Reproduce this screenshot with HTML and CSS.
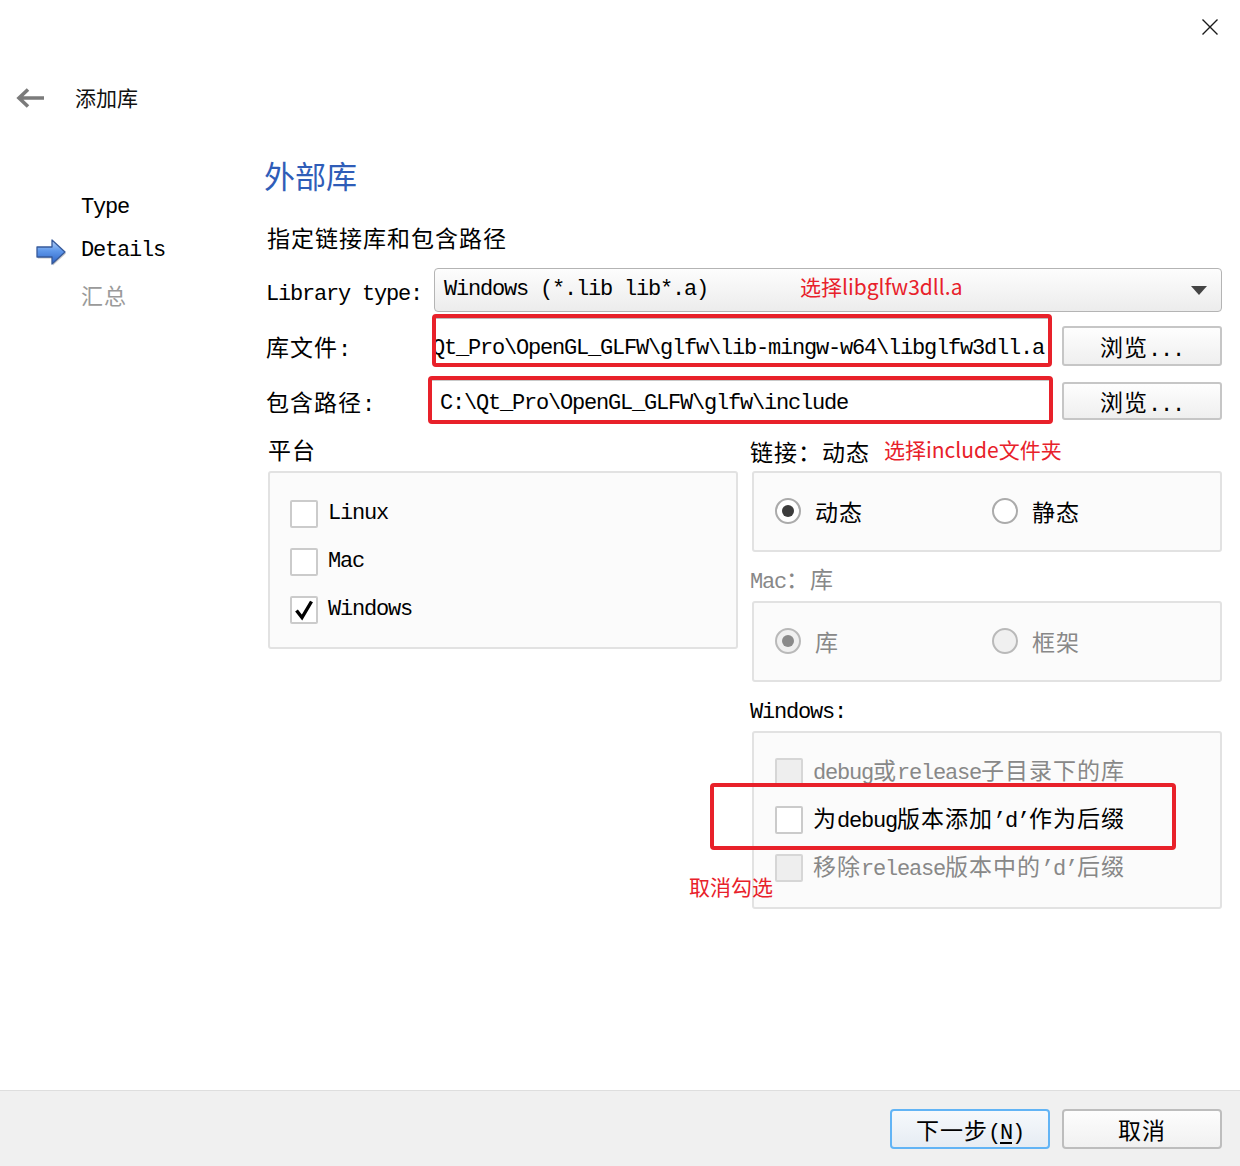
FILE: index.html
```html
<!DOCTYPE html>
<html>
<head>
  <meta charset="utf-8">
  <title>添加库</title>
  <link rel="stylesheet" href="styles.css">
</head>
<body>
  <div class="topbar">
    <svg class="close-icon" width="18" height="18" viewBox="0 0 18 18"><path d="M1.5 1.5 L16.5 16.5 M16.5 1.5 L1.5 16.5" stroke="#1a1a1a" stroke-width="1.4" fill="none"/></svg>
  </div>

  <div class="header">
    <svg class="back-icon" width="30" height="22" viewBox="0 0 30 22"><path d="M29 11 H5 M13 2.5 L4 11 L13 19.5" stroke="#7b7b7b" stroke-width="3.6" fill="none"/></svg>
    <span class="header-title">添加库</span>
  </div>

  <div class="main">
    <ul class="steps">
      <li><span class="en">Type</span></li>
      <li class="current">
        <svg class="step-arrow" width="32" height="28" viewBox="0 0 32 28">
          <defs>
            <linearGradient id="arrowFill" x1="0" y1="0" x2="0" y2="1">
              <stop offset="0" stop-color="#b7d2f7"/>
              <stop offset="0.45" stop-color="#5f98ea"/>
              <stop offset="1" stop-color="#2d63c6"/>
            </linearGradient>
          </defs>
          <polygon points="2,9 17,9 17,2 30,14 17,26 17,19 2,19" fill="#c8c8c8" transform="translate(1,1.5)"/>
          <polygon points="2,9 17,9 17,2 30,14 17,26 17,19 2,19" fill="url(#arrowFill)" stroke="#36599a" stroke-width="1.3" stroke-linejoin="round"/>
        </svg>
        <span class="en">Details</span>
      </li>
      <li class="pending">汇总</li>
    </ul>

    <div class="page">
      <h1 class="page-title">外部库</h1>
      <p class="subtitle">指定链接库和包含路径</p>

      <div class="form">
        <label class="form-label label-type"><span class="en">Library type:</span></label>
        <div class="combo">
          <span class="en">Windows (*.lib lib*.a)</span>
          <svg class="combo-caret" width="16" height="9" viewBox="0 0 16 9"><polygon points="0,0 16,0 8,9" fill="#444"/></svg>
          <span class="note note-combo">选择libglfw3dll.a</span>
        </div>

        <label class="form-label label-lib">库文件<span class="en">:</span></label>
        <div class="mark mark-lib">
          <div class="field field-end"><span class="en">C:\Qt_Pro\OpenGL_GLFW\glfw\lib-mingw-w64\libglfw3dll.a</span></div>
        </div>
        <button class="browse browse-lib">浏览<span class="en">...</span></button>

        <label class="form-label label-inc">包含路径<span class="en">:</span></label>
        <div class="mark mark-inc">
          <div class="field field-inc"><span class="en">C:\Qt_Pro\OpenGL_GLFW\glfw\include</span></div>
        </div>
        <button class="browse browse-inc">浏览<span class="en">...</span></button>
      </div>

      <div class="options">
        <div class="col">
          <div class="group-title">平台</div>
          <div class="group check-group">
            <div class="check"><span class="box"></span><span class="en">Linux</span></div>
            <div class="check"><span class="box"></span><span class="en">Mac</span></div>
            <div class="check">
              <span class="box"><svg width="24" height="24" viewBox="0 0 24 24"><path d="M4.5 12.5 L10 19.5 L19.5 3.5" stroke="#000" stroke-width="3.4" fill="none"/></svg></span>
              <span class="en">Windows</span>
            </div>
          </div>
        </div>

        <div class="col col-right">
          <div class="group-title">链接：动态<span class="note note-inline">选择include文件夹</span></div>
          <div class="group radio-group">
            <div class="radio"><span class="dot on"></span>动态</div>
            <div class="radio"><span class="dot"></span>静态</div>
          </div>

          <div class="group-title sub-title disabled"><span class="en">Mac</span>：库</div>
          <div class="group radio-group disabled">
            <div class="radio"><span class="dot on"></span>库</div>
            <div class="radio"><span class="dot"></span>框架</div>
          </div>

          <div class="group-title sub-title"><span class="en">Windows:</span></div>
          <div class="group check-group win-group">
            <div class="check disabled"><span class="box"></span><span><span class="en">debug</span>或<span class="en">release</span>子目录下的库</span></div>
            <div class="check"><span class="box"></span><span>为<span class="en">debug</span>版本添加<span class="en">’d’</span>作为后缀</span></div>
            <div class="check disabled"><span class="box"></span><span>移除<span class="en">release</span>版本中的<span class="en">’d’</span>后缀</span></div>
            <div class="mark-box"></div>
            <span class="note note-uncheck">取消勾选</span>
          </div>
        </div>
      </div>
    </div>
  </div>

  <div class="footer">
    <button class="btn btn-primary">下一步<span class="en">(<u>N</u>)</span></button>
    <button class="btn">取消</button>
  </div>
</body>
</html>
```

FILE: styles.css
```css
html, body {
  margin: 0;
  height: 100%;
}

body {
  width: 1240px;
  height: 1166px;
  display: flex;
  flex-direction: column;
  background: #fff;
  color: #000;
  font-family: "Noto Sans CJK SC", sans-serif;
  font-size: 23px;
  letter-spacing: 1px;
  line-height: 1.3;
}

.en {
  font-family: "Liberation Mono", monospace;
  font-size: 22px;
  letter-spacing: -1.2px;
}

/* top bar and header */

.topbar {
  height: 70px;
  display: flex;
  justify-content: flex-end;
}

.close-icon {
  margin: 18px 21px 0 0;
}

.header {
  height: 56px;
  display: flex;
  align-items: center;
  padding-left: 15px;
}

.back-icon {
  margin-right: 30px;
}

.header-title {
  font-size: 21px;
  letter-spacing: 0;
  color: #111;
}

/* main area */

.main {
  flex: 1;
  display: grid;
  grid-template-columns: 264px minmax(0, 1fr);
  padding-right: 18px;
}

.steps {
  list-style: none;
  margin: 0;
  padding: 61px 0 0 0;
}

.steps li {
  display: grid;
  grid-template-columns: 81px auto;
  align-items: center;
  height: 43px;
}

.steps li > span,
.steps li.pending {
  grid-column: 2;
}

.steps li.pending {
  color: #9a9a9a;
  display: block;
  padding-left: 81px;
  line-height: 43px;
  font-size: 22px;
}

.step-arrow {
  grid-column: 1;
  justify-self: end;
  margin-right: 14px;
}

.page-title {
  margin: 29px 0 0 0;
  font-size: 31px;
  font-weight: normal;
  letter-spacing: 0;
  line-height: 40px;
  color: #2f5db8;
}

.subtitle {
  margin: 26px 0 0 3px;
  line-height: 32px;
}

/* form rows */

.form {
  margin-top: 15px;
  display: grid;
  grid-template-columns: 158px minmax(0, 1fr) 160px;
  grid-template-rows: 44px 57px 58px;
  column-gap: 12px;
  align-items: start;
}

.form-label {
  padding-left: 2px;
  white-space: nowrap;
  line-height: 30px;
}

.label-type { margin-top: 7px; }
.label-lib { margin-top: 19px; }
.label-inc { margin-top: 17px; }

.combo {
  grid-column: 2 / 4;
  height: 44px;
  box-sizing: border-box;
  border: 1px solid #b4b4b4;
  border-radius: 4px;
  background: linear-gradient(#fdfdfd, #ececec);
  display: flex;
  align-items: center;
  padding: 0 14px 0 9px;
  position: relative;
}

.combo .en {
  flex: 1;
}

.mark {
  min-width: 0;
  margin: 0 -2px;
  border: 4px solid #e8212a;
  border-radius: 4px;
  background: #fff;
  box-sizing: border-box;
}

.mark-lib {
  height: 53px;
  margin-top: 2px;
}

.mark-inc {
  height: 48px;
  margin: 7px -3px 0 -6px;
}

.field {
  height: 100%;
  box-sizing: border-box;
  border-top: 1px solid #c9c9c9;
  display: flex;
  align-items: center;
  overflow: hidden;
  white-space: nowrap;
  padding: 0 6px 0 8px;
}

.field-end {
  justify-content: flex-end;
  padding: 17px 4px 0 0;
  border-top-color: #bdbdbd;
}

.field-inc {
  padding-top: 7px;
}

.browse {
  height: 40px;
  border: 2px solid #c6c6c6;
  border-radius: 3px;
  background: linear-gradient(#fefefe, #efefef);
  font-family: inherit;
  font-size: 23px;
  letter-spacing: 1px;
  padding: 0;
  color: #000;
}

.browse-lib {
  margin-top: 14px;
}

.browse-inc {
  height: 38px;
  margin-top: 13px;
}

/* annotations */

.note {
  font-family: "Noto Sans CJK SC", sans-serif;
  font-size: 21px;
  letter-spacing: 0;
  color: #e8212a;
}

.note-combo {
  position: absolute;
  left: 365px;
  top: 4px;
}

.note-inline {
  margin-left: 14px;
  vertical-align: 3px;
}

/* option groups */

.options {
  margin: 4px 0 0 4px;
  display: grid;
  grid-template-columns: 470px 472px;
  column-gap: 12px;
  align-items: start;
}

.group-title {
  line-height: 36px;
  height: 36px;
  white-space: nowrap;
}

.sub-title {
  margin-top: 8px;
}

.disabled {
  color: #888;
}

.group {
  margin-top: 4px;
  border: 2px solid #e2e2e2;
  border-radius: 3px;
  background: #fbfbfb;
}

.col-right .group {
  margin-left: 2px;
}

.col-right .sub-title + .group {
  margin-top: 5px;
}

.check-group {
  padding: 17px 20px 13px;
}

.win-group {
  position: relative;
  padding: 15px 21px 15px;
}

.check {
  height: 48px;
  display: flex;
  align-items: center;
  gap: 10px;
}

.box {
  width: 28px;
  height: 28px;
  box-sizing: border-box;
  border: 2px solid #cbcbcb;
  border-radius: 2px;
  background: #fff;
  display: flex;
  align-items: center;
  justify-content: center;
}

.check.disabled .box {
  background: #eeeeee;
  border-color: #d6d6d6;
}

.radio-group {
  height: 81px;
  box-sizing: border-box;
  display: grid;
  grid-template-columns: 217px 1fr;
  align-items: center;
  padding-left: 21px;
}

.radio {
  display: flex;
  align-items: center;
  gap: 14px;
}

.dot {
  width: 26px;
  height: 26px;
  box-sizing: border-box;
  border: 2px solid #ababab;
  border-radius: 50%;
  background: #fff;
  display: flex;
  align-items: center;
  justify-content: center;
}

.dot.on::after {
  content: "";
  width: 12px;
  height: 12px;
  border-radius: 50%;
  background: #3c3c3c;
}

.radio-group.disabled .dot {
  background: #f0f0f0;
  border-color: #b9b9b9;
}

.radio-group.disabled .dot.on::after {
  background: #8a8a8a;
}

.mark-box {
  position: absolute;
  left: -44px;
  top: 50px;
  width: 466px;
  height: 67px;
  box-sizing: border-box;
  border: 4px solid #e8212a;
  border-radius: 4px;
}

.note-uncheck {
  position: absolute;
  left: -65px;
  top: 140px;
}

/* footer */

.footer {
  height: 76px;
  box-sizing: border-box;
  border-top: 1px solid #dedede;
  background: #f0f0f0;
  display: flex;
  justify-content: flex-end;
  align-items: center;
  gap: 12px;
  padding: 0 18px 0 0;
}

.btn {
  width: 160px;
  height: 40px;
  border: 2px solid #bdbdbd;
  border-radius: 4px;
  background: linear-gradient(#fdfdfd, #f1f1f1);
  font-family: inherit;
  font-size: 23px;
  letter-spacing: 1px;
  color: #000;
  padding: 0;
}

.btn-primary {
  border-color: #62b4f5;
  background: linear-gradient(#f6f9fc, #e6ecf3);
}

.btn u {
  text-underline-offset: 3px;
}
```
